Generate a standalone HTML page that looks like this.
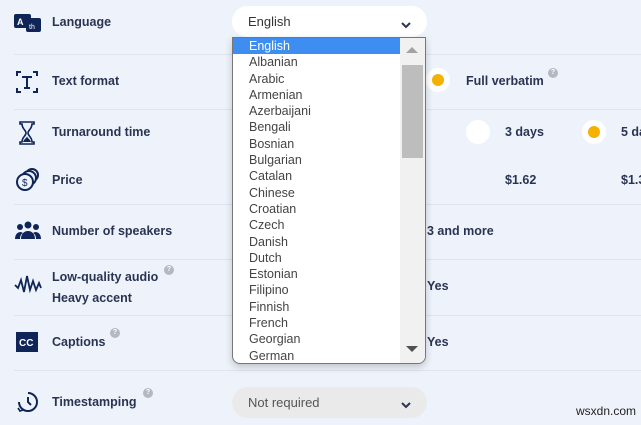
<!DOCTYPE html>
<html><head><style>
*{margin:0;padding:0;box-sizing:border-box}
body{width:641px;height:425px;overflow:hidden;background:#eef3fb;font-family:"Liberation Sans",sans-serif;position:relative;color:#243052}
.a{position:absolute}
.lbl{position:absolute;left:52px;font-size:12.5px;font-weight:bold;color:#2a3452;line-height:14px;white-space:nowrap}
.hr{position:absolute;left:14px;width:627px;height:1px;background:#dde5f1}
.q{position:absolute;width:10px;height:10px;border-radius:50%;background:#b4b8bf;color:#fff;font-size:7px;text-align:center;line-height:10px;font-weight:bold}
.sel{position:absolute;left:232px;width:195px;height:31px;border-radius:16px;font-size:13px;color:#333;padding:8px 0 0 16px}
.rad{position:absolute;width:24px;height:24px;border-radius:50%;background:#fff}
.rad i{position:absolute;left:6px;top:6px;width:12px;height:12px;border-radius:50%;background:#f5b100}
.v{position:absolute;font-size:12.5px;font-weight:bold;color:#2a3452;white-space:nowrap}
#dd{position:absolute;left:232px;top:37px;width:194px;height:327px;background:#fff;border:1px solid #777;border-radius:0 0 8px 8px;box-shadow:0 3px 8px rgba(0,0,0,.2);overflow:hidden}
#dd div.it{height:16.3px;line-height:16.3px;font-size:12.5px;color:#444;padding-left:16px;width:167px}
#dd div.it.s{background:#3d8ef0;color:#fff}
</style></head><body>
<div class="hr" style="top:54px"></div>
<div class="hr" style="top:109px"></div>
<div class="hr" style="top:204px"></div>
<div class="hr" style="top:259px"></div>
<div class="hr" style="top:315px"></div>
<div class="hr" style="top:370px"></div>

<svg class="a" style="left:14px;top:14px" width="28" height="20"><rect x="0" y="0" width="17" height="14" rx="2" fill="#0f2457"/><rect x="12" y="4" width="15" height="14" rx="2" fill="#0f2457"/><text x="3" y="11" font-size="9" fill="#fff" font-family="Liberation Sans" font-weight="bold">A</text><text x="15" y="15" font-size="7" fill="#fff">th</text></svg>
<svg class="a" style="left:15px;top:70px" width="24" height="24" fill="none" stroke="#0f2457" stroke-width="2"><path d="M2 6V2h4M18 2h4v4M2 18v4h4M22 18v4h-4"/><path d="M7 7h10M12 7v11M9 18h6" stroke-width="2"/></svg>
<svg class="a" style="left:19px;top:121px" width="16" height="24" fill="#0f2457"><path d="M1 1h14v2h-2c0 5-4 6-4 9 0 3 4 4 4 9h2v2H1v-2h2c0-5 4-6 4-9 0-3-4-4-4-9H1z" fill="none" stroke="#0f2457" stroke-width="1.6"/><path d="M4 21c1-3 4-4 4-6 0 2 3 3 4 6z"/></svg>
<svg class="a" style="left:15px;top:167px" width="26" height="26" fill="none" stroke="#0f2457" stroke-width="2"><circle cx="17" cy="8" r="6"/><circle cx="14" cy="11" r="7" fill="#eef3fb"/><circle cx="10" cy="15" r="8" fill="#eef3fb"/><text x="7" y="19" font-size="10" fill="#0f2457" stroke="none">$</text></svg>
<svg class="a" style="left:15px;top:221px" width="26" height="20" fill="#0f2457"><circle cx="13" cy="4" r="3.5"/><circle cx="5" cy="6" r="3"/><circle cx="21" cy="6" r="3"/><path d="M6 18c0-5 3-8 7-8s7 3 7 8zM0 18c0-4 2-7 6-7l2 1c-2 1-3 3-3 6zM26 18c0-4-2-7-6-7l-2 1c2 1 3 3 3 6z"/></svg>
<svg class="a" style="left:14px;top:274px" width="28" height="20" fill="none" stroke="#0f2457" stroke-width="1.8"><path d="M1 11l3 3 3-8 3 12 3-16 3 14 3-9 3 9 3-7 2 5"/></svg>
<svg class="a" style="left:16px;top:332px" width="22" height="20"><rect width="22" height="20" fill="#0f2457"/><text x="3" y="14" font-size="10" font-weight="bold" fill="#fff" font-family="Liberation Sans">CC</text></svg>
<svg class="a" style="left:16px;top:390px" width="24" height="24" fill="none" stroke="#0f2457" stroke-width="2"><path d="M12 3a9 9 0 1 1-9 9"/><path d="M12 7v5l3 3"/><path d="M2 18l2 3 3-1" stroke-width="1.6"/></svg>

<div class="lbl" style="top:15px">Language</div>
<div class="lbl" style="top:74px">Text format</div>
<div class="lbl" style="top:125px">Turnaround time</div>
<div class="lbl" style="top:173px">Price</div>
<div class="lbl" style="top:224px">Number of speakers</div>
<div class="lbl" style="top:270px">Low-quality audio</div>
<div class="q" style="left:164px;top:265px">?</div>
<div class="lbl" style="top:291px">Heavy accent</div>
<div class="lbl" style="top:335px">Captions</div>
<div class="q" style="left:110px;top:328px">?</div>
<div class="lbl" style="top:395px">Timestamping</div>
<div class="q" style="left:143px;top:388px">?</div>

<div class="sel" style="top:6px;background:#fff">English<span class="a" style="left:168px;top:12px">
<svg width="12" height="10" fill="none" stroke="#2a3452" stroke-width="2"><path d="M2 3l4 4 4-4"/></svg></span></div>
<div class="sel" style="top:387px;background:#ebeaea;color:#555">Not required<span class="a" style="left:168px;top:11px">
<svg width="12" height="10" fill="none" stroke="#2a3452" stroke-width="2"><path d="M2 3l4 4 4-4"/></svg></span></div>

<div class="rad" style="left:426px;top:68px"><i></i></div>
<div class="v" style="left:466px;top:74px">Full verbatim</div>
<div class="q" style="left:548px;top:68px">?</div>
<div class="rad" style="left:466px;top:120px"></div>
<div class="v" style="left:505px;top:125px">3 days</div>
<div class="rad" style="left:582px;top:120px"><i></i></div>
<div class="v" style="left:621px;top:125px">5 days</div>
<div class="v" style="left:505px;top:173px">$1.62</div>
<div class="v" style="left:621px;top:173px">$1.35</div>
<div class="v" style="left:427px;top:224px">3 and more</div>
<div class="v" style="left:427px;top:279px">Yes</div>
<div class="v" style="left:427px;top:335px">Yes</div>

<div id="dd">
<div class="it s">English</div><div class="it">Albanian</div><div class="it">Arabic</div><div class="it">Armenian</div><div class="it">Azerbaijani</div><div class="it">Bengali</div><div class="it">Bosnian</div><div class="it">Bulgarian</div><div class="it">Catalan</div><div class="it">Chinese</div><div class="it">Croatian</div><div class="it">Czech</div><div class="it">Danish</div><div class="it">Dutch</div><div class="it">Estonian</div><div class="it">Filipino</div><div class="it">Finnish</div><div class="it">French</div><div class="it">Georgian</div><div class="it">German</div>
<div class="a" style="left:167px;top:0;width:26px;height:327px;background:#f1f1f1"></div>
<div class="a" style="left:169px;top:27px;width:21px;height:93px;background:#bdbdbd"></div>
<svg class="a" style="left:173px;top:8px" width="12" height="8"><path d="M0 7L6 1l6 6z" fill="#a3a3a3"/></svg>
<svg class="a" style="left:173px;top:307px" width="12" height="8"><path d="M0 1l6 6 6-6z" fill="#505050"/></svg>
</div>

<div class="a" style="left:576px;top:404px;font-size:12px;color:#222">wsxdn.com</div>
</body></html>
